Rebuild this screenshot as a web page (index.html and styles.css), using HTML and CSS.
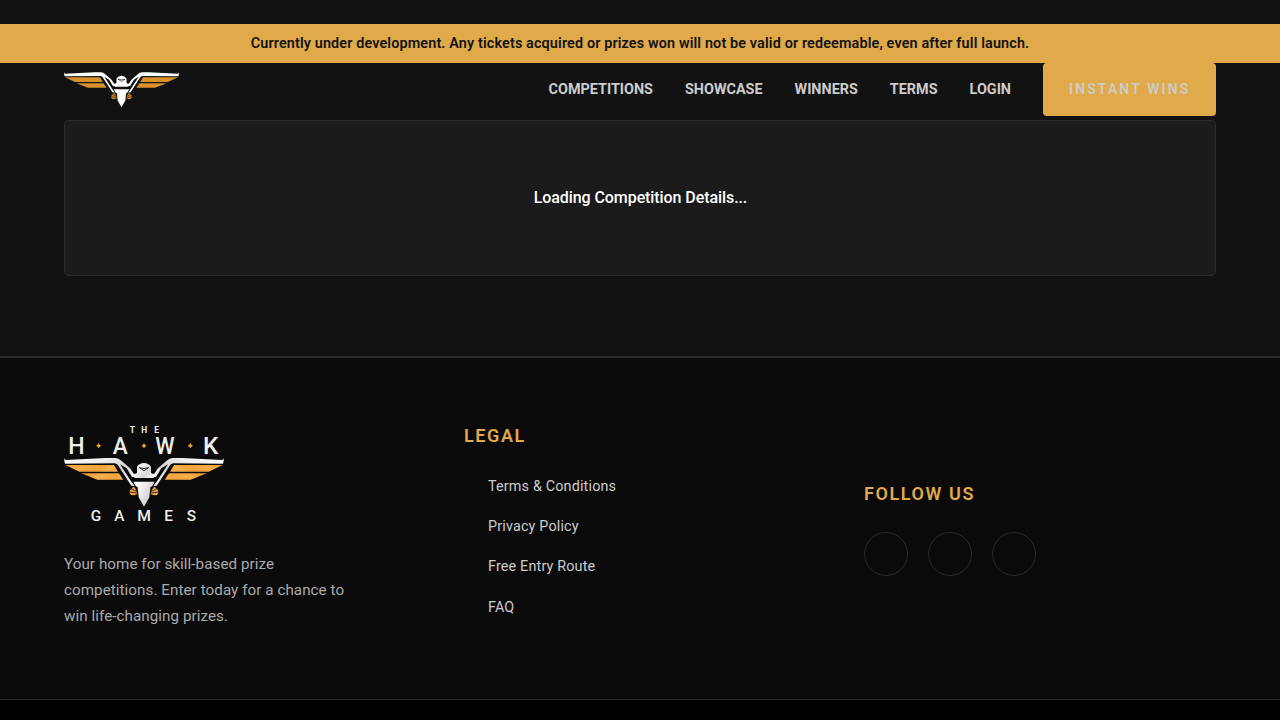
FILE: index.html
```html
<!DOCTYPE html>
<html lang="en">
<head>
<meta charset="utf-8">
<title>The Hawk Games</title>
<link rel="stylesheet" href="styles.css">
</head>
<body>
<svg class="defs" width="0" height="0" aria-hidden="true">
  <defs>
    <linearGradient id="silver" x1="0" y1="0" x2="1" y2="0.6">
      <stop offset="0" stop-color="#fff"/><stop offset="0.45" stop-color="#eee"/><stop offset="0.75" stop-color="#d6d6d6"/><stop offset="1" stop-color="#f2f2f2"/>
    </linearGradient>
    <linearGradient id="amber" x1="0" y1="0" x2="1" y2="0.35">
      <stop offset="0" stop-color="#ee9f38"/><stop offset="0.3" stop-color="#f7ac48"/><stop offset="0.6" stop-color="#f0a13a"/><stop offset="0.75" stop-color="#f8b04e"/><stop offset="1" stop-color="#f3a53f"/>
    </linearGradient>
    <g id="half">
      <path class="feather" d="M28 141H174L186 161H70ZM76 166H189L202 185H124Z"/>
      <path class="bone" d="M25 121L29 126L150 120H178Q188 121 196 128L212 142Q224 150 232 166L238 177H228L212 151L192 139L226 191L236 204L226 203L184 139L176 136L27 137Q24 130 25 121Z"/>
      <path class="feather" d="M234 206Q221 212 221 224L225 231L233 232L243 229L241 217Z"/>
      <path class="cut" d="M242 220L225 212M241 225L221 222"/>
    </g>
    <g id="hawk">
      <use href="#half"/>
      <use href="#half" transform="matrix(-1 0 0 1 528 0)"/>
      <path class="bone" d="M243 146Q250 135 264 135Q278 135 285 146V164Q290 170 300 166L292 180H236L228 166Q238 170 243 164Z"/>
      <path class="cut" d="M250 149Q264 154 278 149L264 158Z"/>
      <path class="bone" d="M232 191H296L289 204L283 208L280 238L264 266L248 238L245 208L239 204Z"/>
    </g>
  </defs>
</svg>

<div class="notice">Currently under development. Any tickets acquired or prizes won will not be valid or redeemable, even after full launch.</div>
<header class="header">
  <a class="brand"><svg class="mark" viewBox="24 119 480 150" width="115" height="36"><use href="#hawk"/></svg></a>
  <nav class="nav">
    <a>COMPETITIONS</a><a>SHOWCASE</a><a>WINNERS</a><a>TERMS</a><a>LOGIN</a>
    <a class="cta">INSTANT WINS</a>
  </nav>
</header>
<main class="main">
  <section class="panel"><span class="loading">Loading Competition Details...</span></section>
</main>
<footer class="footer">
  <div class="columns">
    <div class="about">
      <svg class="logo" viewBox="24 24 480 288" width="160" height="96">
        <g class="small">
          <text x="221" y="46">T</text><text x="256" y="46">H</text><text x="295" y="46">E</text>
        </g>
        <g class="large">
          <text x="37" y="107" textLength="49" lengthAdjust="spacingAndGlyphs">H</text><text x="170" y="107" textLength="45" lengthAdjust="spacingAndGlyphs">A</text><text x="298" y="107" textLength="58" lengthAdjust="spacingAndGlyphs">W</text><text x="441" y="107" textLength="46" lengthAdjust="spacingAndGlyphs">K</text>
        </g>
        <g class="medium">
          <text x="104" y="308">G</text><text x="175" y="308">A</text><text x="244" y="308" textLength="41" lengthAdjust="spacingAndGlyphs">M</text><text x="325" y="308">E</text><text x="392" y="308">S</text>
        </g>
        <path class="feather" d="M128 75L131 80L136 83L131 86L128 91L125 86L120 83L125 80ZM264 75L267 80L272 83L267 86L264 91L261 86L256 83L261 80ZM403 75L406 80L411 83L406 86L403 91L400 86L395 83L400 80Z"/>
        <use href="#hawk"/>
      </svg>
      <p class="blurb">Your home for skill-based prize competitions. Enter today for a chance to win life-changing prizes.</p>
    </div>
    <div class="legal">
      <h2 class="title">LEGAL</h2>
      <ul class="links"><li>Terms &amp; Conditions</li><li>Privacy Policy</li><li>Free Entry Route</li><li>FAQ</li></ul>
    </div>
    <div class="social">
      <h2 class="title follow">FOLLOW US</h2>
      <div class="rings"><a class="ring"></a><a class="ring"></a><a class="ring"></a></div>
    </div>
  </div>
</footer>
</body>
</html>
```

FILE: styles.css
```css
* { box-sizing: border-box; }
body { margin: 0; padding-top: 24px; height: 720px; overflow: hidden; background: linear-gradient(#121212 0 356px, #000 356px); color: #fff; font-family: Roboto, sans-serif; }
.defs { display: block; width: 0; height: 0; overflow: hidden; }
.notice { height: 39px; line-height: 39px; text-align: center; background: #e0aa4a; color: #121212; font-size: 14.4px; font-weight: 600; letter-spacing: 0.13px; white-space: nowrap; }
.header { height: 57px; padding: 0 64px; display: flex; justify-content: space-between; align-items: flex-start; }
.brand { padding-top: 9px; }
.mark, .logo { display: block; overflow: visible; }
.mark { --bone: #fff; --feather: #d99129; }
.logo { --bone: url(#silver); --feather: url(#amber); }
.nav { display: flex; align-items: center; gap: 32px; height: 53px; color: #ccc; font-size: 14.4px; font-weight: 700; white-space: nowrap; }
.cta { width: 173px; height: 53px; line-height: 53px; padding-left: 26px; border-radius: 4px; background: #e0aa4a; font-size: 14px; font-weight: 600; letter-spacing: 2.12px; }
.main { padding: 0 64px; height: 236px; }
.panel { height: 156px; display: flex; justify-content: center; align-items: center; border: 1px solid #2a2a2a; border-radius: 5px; background: #1b1b1b; }
.loading { padding: 0 0 2px 1px; font-size: 16px; font-weight: 500; letter-spacing: -0.08px; }
.footer { height: 344px; padding: 68px 64px 0; border-top: 2px solid #2a2a2a; border-bottom: 1px solid #2a2a2a; background: #0a0a0a; }
.columns { display: grid; grid-template-columns: 352px 352px 352px; gap: 48px; }
.blurb { margin: 29px 0 0; width: 290px; color: #aaa; font-size: 15.2px; line-height: 26px; letter-spacing: 0.06px; }
.title { margin: 0; color: #e0aa4a; font-size: 18px; line-height: 20px; font-weight: 600; letter-spacing: 1.6px; }
.links { margin: 28.8px 0 0; padding: 0 0 0 24px; list-style: none; color: #ccc; font-size: 14.4px; letter-spacing: 0.15px; }
.links li { height: 40.25px; line-height: 24px; }
.social { padding-top: 58px; }
.rings { margin-top: 28px; display: flex; gap: 20px; }
.ring { width: 44px; height: 44px; border: 1px solid #2a2a2a; border-radius: 50%; }
.bone { fill: var(--bone); }
.feather { fill: var(--feather); }
.cut { fill: none; stroke: #0c0c0c; stroke-width: 2.5; }
.small, .medium, .large { fill: #eee; font-family: Roboto, sans-serif; font-weight: 500; }
.small { font-size: 25px; font-weight: 700; }
.large { font-size: 70px; }
.medium { font-size: 46px; }
```
